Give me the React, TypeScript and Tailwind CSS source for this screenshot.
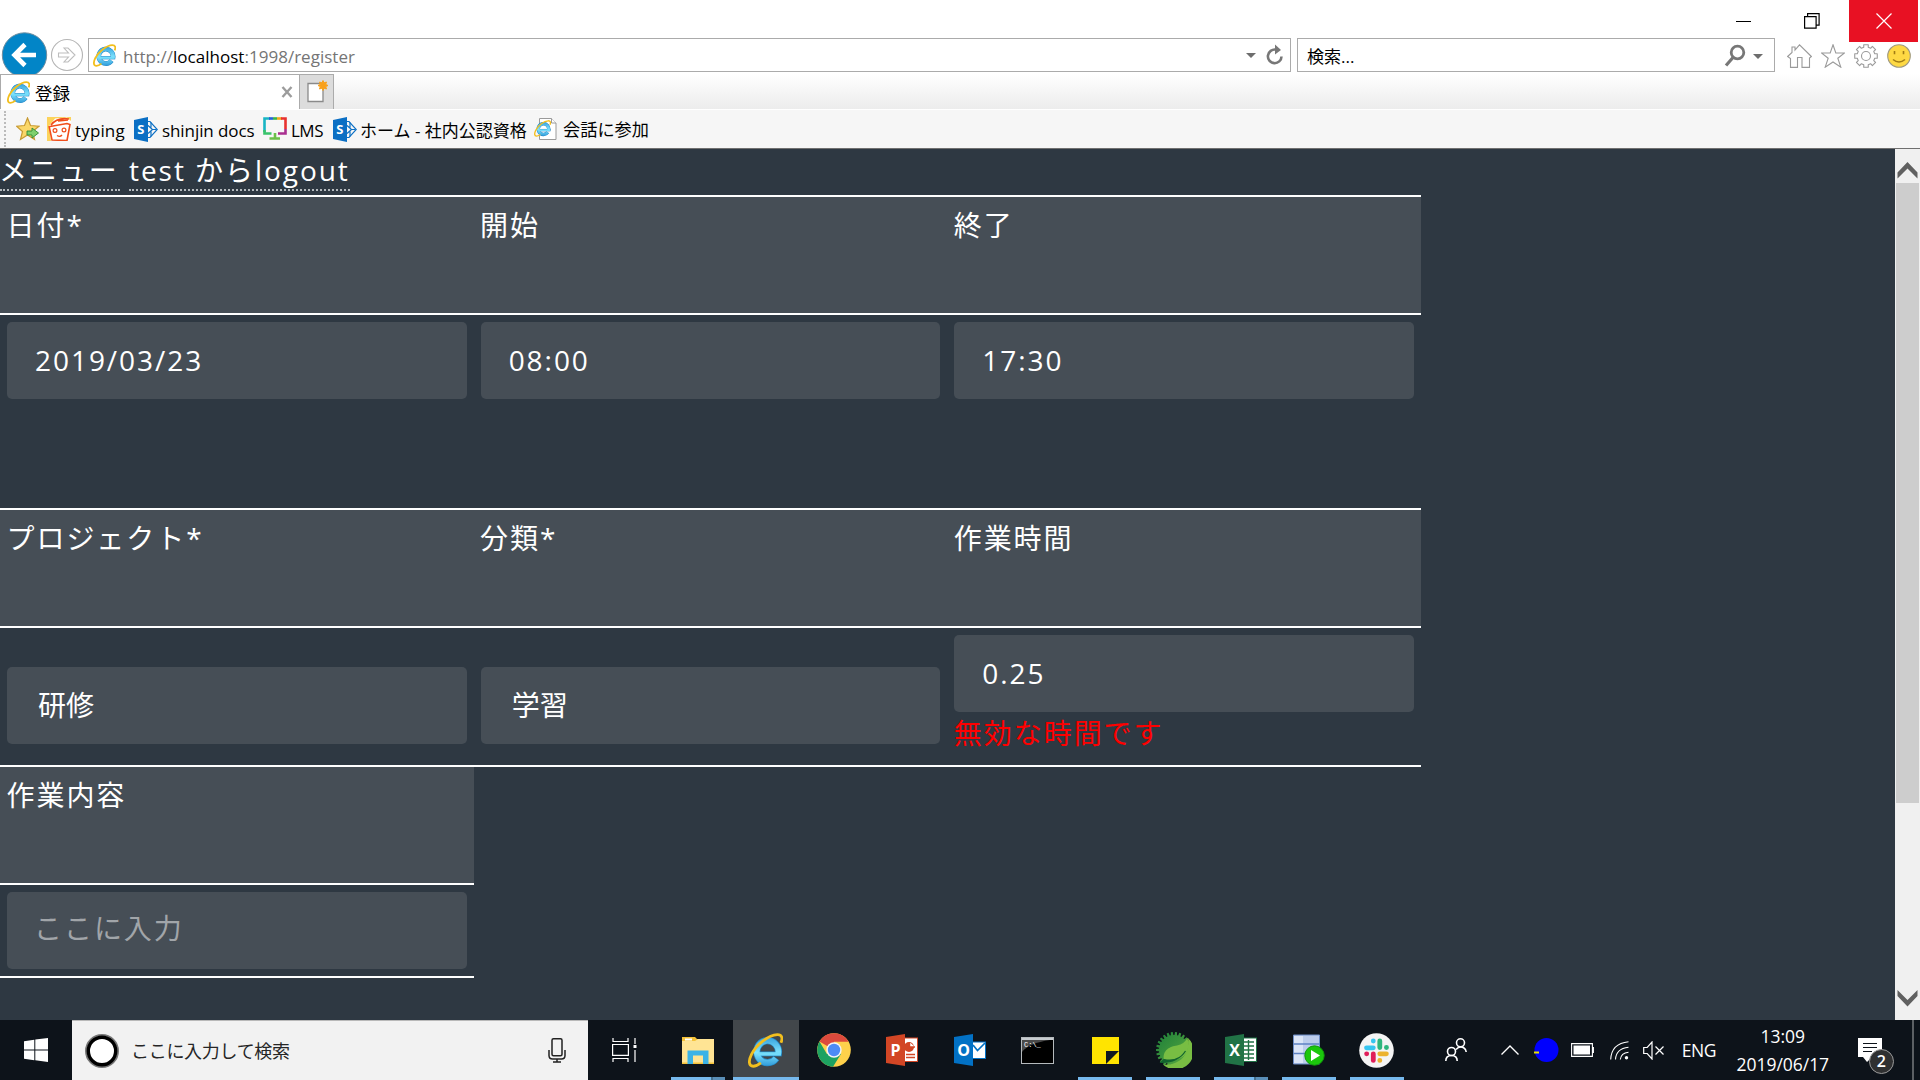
import React from "react";

const JP = "font-['Open_Sans','Noto_Sans_CJK_JP',sans-serif]";

function IeIcon({ size }: { size: number }) {
  return (
    <svg width={size} height={size} viewBox="0 0 34 34" fill="none" className="shrink-0">
      <defs>
        <linearGradient id="ieBlue" gradientUnits="userSpaceOnUse" x1="0" y1="5" x2="0" y2="33">
          <stop offset="0" stopColor="#3aa5df" />
          <stop offset="0.5" stopColor="#7fe3fd" />
          <stop offset="1" stopColor="#2a97d8" />
        </linearGradient>
      </defs>
      <path d="M27.500 24.500A10.500 10.700 0 1 1 29.300 20.500" stroke="#2387c4" strokeWidth="7" />
      <path d="M10 20.300H32.800" stroke="#2387c4" strokeWidth="4.800" />
      <path d="M27.300 24.800A10.500 10.700 0 1 1 29.300 20.500" stroke="url(#ieBlue)" strokeWidth="5.600" />
      <path d="M10 20.300H32" stroke="#74dcfa" strokeWidth="3.400" />
      <path
        d="M32 9.500C34 5 33 1.500 28.500 1.600C20 2 8.500 11 3.500 20.500C.3 27 .5 32.300 5 32.300C7.500 32.300 10 31 12.500 29"
        stroke="#f2bf1e"
        strokeWidth="2.700"
      />
    </svg>
  );
}

function SharePointIcon() {
  return (
    <svg width="24" height="25" viewBox="0 0 24 25" className="shrink-0">
      <path d="M13 4.500h3l7.300 8-7.300 8h-3" fill="none" stroke="#0b6fc4" strokeWidth="1.200" />
      <path d="M14 8.500l4.500 4-4.500 4M17 5.500v5M17 14.500v5M18.500 12.500h4" fill="none" stroke="#0b6fc4" strokeWidth="1.200" />
      <path d="M0 3L14 0V25L0 22Z" fill="#0b6fc4" />
      <text x="3.200" y="17.300" fontSize="13" fontWeight="700" fill="#fff" fontFamily="Open Sans">S</text>
    </svg>
  );
}

function Gear() {
  const pts: string[] = [];
  for (let i = 0; i < 8; i++) {
    const a = (i * Math.PI) / 4 - Math.PI / 2;
    for (const [d, r] of [[-0.25, 9], [-0.2, 11.5], [0.2, 11.5], [0.25, 9]]) {
      pts.push(`${(12 + r * Math.cos(a + d)).toFixed(2)},${(12 + r * Math.sin(a + d)).toFixed(2)}`);
    }
  }
  return (
    <svg width="24" height="24" viewBox="0 0 24 24" fill="none" stroke="#9a9a9a" strokeWidth="1.100">
      <polygon points={pts.join(" ")} strokeLinejoin="round" />
      <circle cx="12" cy="12" r="4.500" />
    </svg>
  );
}

function TitleBar() {
  return (
    <div className="h-[38px] flex justify-end items-start">
      <div className="w-[69px] h-[42px] flex items-center justify-center pr-1">
        <div className="w-[15px] h-px bg-black" />
      </div>
      <div className="w-[69px] h-[42px] flex items-center justify-center pr-[5px]">
        <svg width="16" height="16" viewBox="0 0 16 16" fill="none" stroke="#000" strokeWidth="1.200">
          <path d="M.6 3.600h11.500v11.500H.6zM3.600 3.600V.6h11.500v11.500h-3" />
        </svg>
      </div>
      <div className="relative z-10 w-[69px] h-[42px] mr-[2px] bg-[#e81123] flex items-center justify-center">
        <svg width="16" height="16" viewBox="0 0 16 16" stroke="#fff" strokeWidth="1.200">
          <path d="M.5 .5l15 15M15.500 .5l-15 15" />
        </svg>
      </div>
    </div>
  );
}

function AddressRow() {
  return (
    <div className="h-9 flex items-start">
      <div className="w-[88px] h-9 flex">
        <svg width="88" height="42" viewBox="0 0 88 42" fill="none" className="-mt-[6px] shrink-0">
          <circle cx="24.500" cy="23" r="22.200" fill="#0285c7" stroke="#6f8ea0" strokeWidth="1" />
          <path d="M36 23H15M25 12.500L14.500 23L25 33.500" stroke="#fff" strokeWidth="4.600" />
          <circle cx="67" cy="23" r="15.500" stroke="#b5b5b5" strokeWidth="1.100" />
          <path d="M58.500 21h10l-4.500-5h4l7 7-7 7h-4l4.500-5h-10z" stroke="#bdbdbd" strokeWidth="1.100" />
        </svg>
      </div>
      <div className="w-[1203px] h-[34px] border border-[#ababab] bg-white flex items-center pl-1">
        <IeIcon size={23} />
        <span className="ml-[7px] mt-[2px] text-[17px] leading-none text-[#757575] whitespace-nowrap tracking-[0.02px]">
          http://<span className="text-black">localhost</span>:1998/register
        </span>
        <svg width="44" height="24" viewBox="0 0 44 24" className="ml-auto mr-[3px]">
          <path d="M3 10h10l-5 5z" fill="#6d6d6d" />
          <path d="M38.500 13.500A6.800 6.800 0 1 1 33 6.700" fill="none" stroke="#777" strokeWidth="2.600" />
          <path d="M32 1.500l6 5.500-6 4.500z" fill="#777" />
        </svg>
      </div>
      <div className="ml-[6px] w-[478px] h-[34px] border border-[#ababab] bg-white flex items-center pl-[9px]">
        <span className="mt-[2px] text-[17px] leading-none text-black whitespace-nowrap">検索...</span>
        <svg width="44" height="24" viewBox="0 0 44 24" className="ml-auto mr-[9px] mt-[2px]">
          <circle cx="16.500" cy="8.500" r="6.300" fill="none" stroke="#777" strokeWidth="2.800" />
          <path d="M12 13.500L5 21.500" stroke="#777" strokeWidth="3.200" />
          <path d="M32 10h10l-5 5z" fill="#6d6d6d" />
        </svg>
      </div>
      <div className="ml-[12px] pt-[6px] flex gap-[9px]">
        <svg width="25" height="24" viewBox="0 0 25 24" fill="none" stroke="#9a9a9a" strokeWidth="1.100">
          <path d="M.6 12.500L5 8.500V3h3v3L12.500 .8L24.400 12.500L22.500 14V23.400H15V13.500H10.500V23.400H3.500V14.500z" />
        </svg>
        <svg width="24" height="24" viewBox="0 0 24 24" fill="none" stroke="#9a9a9a" strokeWidth="1.100">
          <path d="M12 .8L14.800 9H23.500L16.800 14.200L19.800 23.200L12 18L4.200 23.200L7.200 14.200L.5 9H9.200z" />
        </svg>
        <Gear />
        <svg width="24" height="24" viewBox="0 0 24 24" fill="none">
          <circle cx="12" cy="12" r="11.300" fill="#fed943" stroke="#a09a80" strokeWidth="1.100" />
          <path d="M7.500 7v3.200M16.500 7v3.200M6 15.500q6 5 12 0" stroke="#a17d16" strokeWidth="1.600" />
        </svg>
      </div>
    </div>
  );
}

function TabRow() {
  return (
    <div className="relative z-10 h-[35px] flex bg-gradient-to-b from-white to-[#ececec]">
      <div className="w-[299px] h-[35px] border-t border-l border-[#ababab] bg-white flex items-center pl-[6px] pr-[6px]">
        <IeIcon size={23} />
        <span className="ml-[5px] mt-[3px] text-[17.500px] leading-none text-black">登録</span>
        <svg width="12" height="12" viewBox="0 0 12 12" className="ml-auto" stroke="#9c9c9c" strokeWidth="2.400">
          <path d="M1.500 1l9 10M10.500 1l-9 10" />
        </svg>
      </div>
      <div className="w-[35px] border border-b-0 border-[#ababab] bg-[#dcdcdc] flex items-center justify-center pl-[3px]">
        <svg width="22" height="24" viewBox="0 0 22 24">
          <path d="M1 3.500h15v18H1z" fill="#fff" stroke="#8a8a8a" strokeWidth="1.300" />
          <path d="M16 .5l1.100 2.300 2.400-.8-.8 2.400 2.300 1.100-2.300 1.100.8 2.400-2.400-.8L16 10.500l-1.100-2.300-2.400.8.8-2.400L11 5.500l2.300-1.100-.8-2.400 2.400.8z" fill="#f9a11b" stroke="#f9a11b" />
        </svg>
      </div>
    </div>
  );
}

function Bookmark({ icon, label, width, gap }: { icon: React.ReactNode; label: string; width: number; gap: string }) {
  return (
    <div className="flex items-center shrink-0" style={{ width }}>
      {icon}
      <span className={`${gap} mt-[2px] leading-none text-black whitespace-nowrap`}>{label}</span>
    </div>
  );
}

function BookmarksBar() {
  return (
    <div className="h-[40px] border-t border-t-white border-b border-b-[#707070] bg-[#f6f6f6] flex items-center">
      <div className="ml-1 w-0 h-[36px] border-l-2 border-dotted border-[#bbb]" />
      <svg width="24" height="24" viewBox="0 0 24 24" className="ml-[10px] mr-[7px]">
        <path d="M11.500 1L14.500 8.500L23 9.200L16.500 14.500L18.500 22.500L11.500 18L4.500 22.500L6.500 14.500L.5 9.200L8.500 8.500z" fill="#fbd768" stroke="#c79a33" strokeWidth="1.200" />
        <path d="M11 14h5v-3l6.500 5-6.500 5V18h-5z" fill="#7fd06e" stroke="#2d8b36" strokeWidth=".9" />
      </svg>
      <Bookmark
        width={87}
        gap="ml-1 text-[17px] tracking-[0.150px]"
        label="typing"
        icon={
          <svg width="24" height="24" viewBox="0 0 24 24" className="shrink-0">
            <rect width="24" height="24" fill="#fcd35b" />
            <path d="M2 9L8 1.500 20 .5 24 4v20H4z" fill="#fff" />
            <path d="M4 8Q10 0 22 2M2 9l3 14 15 .5 3-16-3-1L3 9.500M11 4l10-1" fill="none" stroke="#f04e1b" strokeWidth="1.600" />
            <circle cx="8" cy="13.500" r="1.900" fill="none" stroke="#f04e1b" strokeWidth="1.200" />
            <circle cx="17" cy="13" r="1.900" fill="none" stroke="#f04e1b" strokeWidth="1.200" />
            <path d="M10 18.500q3 2 5-.5" fill="none" stroke="#f04e1b" strokeWidth="1.300" />
          </svg>
        }
      />
      <Bookmark width={129} gap="ml-[4px] text-[17px] tracking-[-0.080px]" label="shinjin docs" icon={<SharePointIcon />} />
      <Bookmark
        width={70}
        gap="ml-[4px] text-[17px] tracking-[-0.5px]"
        label="LMS"
        icon={
          <svg width="24" height="24" viewBox="0 0 24 24" fill="none" strokeWidth="2.600" className="shrink-0">
            <path d="M1.500 15V1.500H7" stroke="#18b5c4" />
            <path d="M6 1.500h4" stroke="#2360d8" />
            <path d="M10 1.500h4" stroke="#39b54a" />
            <path d="M14 1.500h5" stroke="#f3a51c" />
            <path d="M18 1.500h4.500V12" stroke="#e8312f" />
            <path d="M22.500 12v4.500H15" stroke="#a92f90" />
            <path d="M1.500 13v3.500h7" stroke="#39c36a" />
            <path d="M12 16v5M6.500 21.500H17" stroke="#6cc04a" />
          </svg>
        }
      />
      <Bookmark width={202} gap="ml-[3px] text-[17px]" label="ホーム - 社内公認資格" icon={<SharePointIcon />} />
      <Bookmark
        width={140}
        gap="ml-[6px] text-[17.200px]"
        label="会話に参加"
        icon={
          <span className="relative w-[22px] h-6 shrink-0 flex items-center">
            <svg width="22" height="24" viewBox="0 0 22 24" fill="#fff" stroke="#9a9a9a">
              <path d="M4.500 1.500h12l4.500 4.500v16.500H4.500z" />
              <path d="M16.500 1.500V6H21" />
            </svg>
            <span className="absolute -left-px top-[3px]">
              <IeIcon size={17} />
            </span>
          </span>
        }
      />
    </div>
  );
}

function HeadCell({ children }: { children: React.ReactNode }) {
  return <div className="w-[473.600px] pl-[6.500px] pt-[7px] leading-[42px]">{children}</div>;
}

function Input({ children, className = "pl-[28px]" }: { children: React.ReactNode; className?: string }) {
  return (
    <div className={`mx-[7px] h-[77px] pb-[2px] rounded-[5px] bg-[#464e56] flex items-center ${className}`}>{children}</div>
  );
}

function RegisterPage() {
  return (
    <div className="flex-1 bg-[#2e3842] text-white text-[28px] tracking-[1.950px] overflow-hidden">
      <div className="h-[46px] flex items-start leading-[42px] whitespace-nowrap">
        <span className="w-[120px] h-[42px] -indent-px border-b-2 border-dotted border-[#b4b9bd]">メニュー</span>
        <span className="ml-[9px] w-[221px] h-[42px] border-b-2 border-dotted border-[#b4b9bd]">test からlogout</span>
      </div>
      <div className="w-[1421px]">
        <div className="h-[120px] border-y-2 border-white bg-[#464e56] flex">
          <HeadCell>日付*</HeadCell>
          <HeadCell>開始</HeadCell>
          <HeadCell>終了</HeadCell>
        </div>
        <div className="h-[193px] pt-[7px] grid grid-cols-3">
          <Input>2019/03/23</Input>
          <Input>08:00</Input>
          <Input>17:30</Input>
        </div>
        <div className="h-[120px] border-y-2 border-white bg-[#464e56] flex">
          <HeadCell>プロジェクト*</HeadCell>
          <HeadCell>分類*</HeadCell>
          <HeadCell>作業時間</HeadCell>
        </div>
        <div className="h-[137px] pt-[7px] grid grid-cols-3">
          <Input className="mt-8 pl-[31px] tracking-normal">研修</Input>
          <Input className="mt-8 pl-[31px] tracking-normal">学習</Input>
          <div>
            <Input>0.25</Input>
            <div className="pl-[6.500px] leading-[43px] text-[#f00]">無効な時間です</div>
          </div>
        </div>
        <div className="border-t-2 border-white">
          <div className="w-[474px]">
            <div className="h-[118px] border-b-2 border-white bg-[#464e56]">
              <HeadCell>作業内容</HeadCell>
            </div>
            <div className="h-[93px] pt-[7px] border-b-2 border-white">
              <div className="mx-[7px] h-[77px] pl-[27px] pb-[6px] rounded-[5px] bg-[#464e56] text-[#a1a5a9] flex items-center">
                ここに入力
              </div>
            </div>
          </div>
        </div>
      </div>
    </div>
  );
}

function ScrollBar() {
  return (
    <div className="w-[25px] bg-[#f0f0f0] flex flex-col items-center">
      <div className="h-[34px] pt-[13px]">
        <svg width="21" height="17" viewBox="0 0 21 17" fill="#606060">
          <path d="M10.500 0L20.500 10.500V16.500L10.500 6.500L.5 16.500V10.500z" />
        </svg>
      </div>
      <div className="w-[23px] h-[620px] bg-[#cdcdcd]" />
      <svg width="21" height="17" viewBox="0 0 21 17" fill="#606060" className="mt-auto mb-[13px]">
        <path d="M10.500 16.500L20.500 6V0L10.500 10L.5 0V6z" />
      </svg>
    </div>
  );
}

function OfficeIcon({ color, letter, children }: { color: string; letter: string; children: React.ReactNode }) {
  return (
    <svg width="32" height="32" viewBox="0 0 32 32">
      {children}
      <path d="M0 3L19 0V32L0 29Z" fill={color} />
      <text x="9.500" y="21.500" textAnchor="middle" fontSize="16" fontWeight="700" fill="#fff" fontFamily="Open Sans">
        {letter}
      </text>
    </svg>
  );
}

function TaskItem({ children, run, split, active }: { children: React.ReactNode; run?: boolean; split?: boolean; active?: boolean }) {
  return (
    <div className="w-[67.900px] h-[60px] flex justify-center">
      <div className={active ? "w-[66px] flex flex-col items-center bg-[#42474b]" : "w-[54px] flex flex-col items-center"}>
        <div className="h-[57px] pt-[3px] flex items-center justify-center">{children}</div>
        {run && (
          <div className="w-full h-[3px] flex">
            <div className="flex-1 bg-[#76b9ed]" />
            {split && <div className="w-[14px] bg-[#5a8fb8] border-l-2 border-[#44708f]" />}
          </div>
        )}
      </div>
    </div>
  );
}

function SpringIcon() {
  const teeth: string[] = [];
  for (let i = 0; i < 26; i++) {
    const a = (i * Math.PI * 2) / 26;
    for (const [d, r] of [[-0.09, 15], [-0.06, 18], [0.05, 18], [0.08, 15]]) {
      teeth.push(`${(18 + r * Math.cos(a + d)).toFixed(2)},${(18 + r * Math.sin(a + d)).toFixed(2)}`);
    }
  }
  return (
    <svg width="36" height="36" viewBox="0 0 36 36" className="ml-[2px]">
      <defs>
        <linearGradient id="spring" x1="0" y1="0" x2="1" y2="1">
          <stop offset="0" stopColor="#1c7d39" />
          <stop offset="1" stopColor="#5fae40" />
        </linearGradient>
      </defs>
      <polygon points={teeth.join(" ")} fill="url(#spring)" />
      <path d="M32 6A17.800 17.800 0 0 1 7 32.500C20 34 34 26 32 6z" fill="#78bd43" />
      <path d="M31.500 6C35 20 28 30 8 28.500C6 18 14 14.500 21 13.500C26 12.500 29 10 31.500 6z" fill="#78bd43" />
      <path d="M5 30.500C14 30.500 24 28 29.500 19C24 28 15 29 8 27.500z" fill="#12652f" stroke="#12652f" strokeWidth="1.200" />
    </svg>
  );
}

function SlackIcon() {
  return (
    <svg width="35" height="35" viewBox="0 0 35 35">
      <circle cx="17.500" cy="17.500" r="17.300" fill="#f4f4f4" />
      <g strokeWidth="4.800" strokeLinecap="round">
        <path d="M14.300 8v.1M7.500 14.800h6.800" stroke="#36c5f0" />
        <path d="M20.800 8v6.500M27.400 14.500h.1" stroke="#2eb67d" />
        <path d="M20.800 27.300v.1M20.800 20.800h6.600" stroke="#ecb22e" />
        <path d="M14.300 20.800v6.600M7.600 20.800h.1" stroke="#e01e5a" />
      </g>
    </svg>
  );
}

function Taskbar() {
  return (
    <div className="h-[60px] bg-[#0d131a] flex">
      <div className="w-[72px] flex items-center justify-center">
        <svg width="24" height="24" viewBox="0 0 24 24" fill="#fff">
          <path d="M0 3.300L10.300 1.800V11.400H0zM11.300 1.600L24 0V11.400H11.300zM0 12.400H10.300V22.200L0 20.700zM11.300 12.400H24V24L11.300 22.300z" />
        </svg>
      </div>
      <div className="w-[516px] border-t border-[#b9b9b9] bg-[#f2f2f2] flex items-center pl-[13px] pr-[22px]">
        <svg width="34" height="34" viewBox="0 0 34 34" fill="none">
          <circle cx="17" cy="17" r="16" stroke="#777" strokeWidth="2" />
          <circle cx="17" cy="17" r="13.700" stroke="#000" strokeWidth="3.400" fill="#fff" />
        </svg>
        <span className="ml-[12px] text-[18px] leading-none tracking-[-0.300px] text-[#262626] whitespace-nowrap">ここに入力して検索</span>
        <svg width="18" height="25" viewBox="0 0 18 25" fill="none" stroke="#222" strokeWidth="1.500" className="ml-auto">
          <rect x="4" y=".8" width="10" height="17" rx="1.500" />
          <path d="M1 12v5.500q0 3.500 3.500 3.500h9q3.500 0 3.500-3.500V12M9 21v3M5 24h8" />
        </svg>
      </div>
      <div className="w-[76px] flex items-center justify-center pr-1">
        <svg width="25" height="24" viewBox="0 0 25 24" fill="none" stroke="#fff" strokeWidth="1.200">
          <path d="M1 0v3.500h15V0M1 24v-3.500h15V24M.6 6.500h15.800v10.800H.6zM23 0v6M23 12v12" />
          <path d="M21.500 7h3v3h-3z" fill="#fff" stroke="none" />
        </svg>
      </div>
      <TaskItem run split>
        <svg width="32" height="27" viewBox="0 0 32 27">
          <path d="M0 0h13l2 2h17v25H0z" fill="#f5c33a" />
          <path d="M0 4h13l3-2h16v23.500H0z" fill="#ffe494" />
          <path d="M3 1.500h7v2H3z" fill="#fff" />
          <path d="M5.500 27V13.500h21V27h-5.500v-8.500H11V27z" fill="#3cb3e6" />
        </svg>
      </TaskItem>
      <TaskItem run active>
        <IeIcon size={35} />
      </TaskItem>
      <TaskItem>
        <svg width="34" height="34" viewBox="0 0 34 34">
          <circle cx="17" cy="17" r="16.800" fill="#fed14b" />
          <path d="M17 17L2.500 8.500A16.800 16.800 0 0 1 31.600 8.800H17z" fill="#dc4a3d" />
          <path d="M2.500 8.500A16.800 16.800 0 0 0 16 33.800L24 21 17 17 9.900 21z" fill="#1da261" />
          <circle cx="17" cy="17" r="7.700" fill="#f4f4f4" />
          <circle cx="17" cy="17" r="6.200" fill="#4c8bf5" />
        </svg>
      </TaskItem>
      <TaskItem>
        <OfficeIcon color="#d24625" letter="P">
          <rect x="14" y="4" width="17.500" height="23.500" fill="#fff" stroke="#d24625" />
          <circle cx="23" cy="13" r="5" fill="#d24625" />
          <path d="M23.500 8v5H29M20 20.500h9M20 23.500h9" stroke="#d24625" strokeWidth="1.500" fill="#fff" />
        </OfficeIcon>
      </TaskItem>
      <TaskItem>
        <OfficeIcon color="#0271c5" letter="O">
          <rect x="14" y="8" width="17.500" height="16.500" fill="#fff" stroke="#0271c5" />
          <path d="M19 11l4.500 5.500L31 9" fill="none" stroke="#0271c5" strokeWidth="1.700" />
        </OfficeIcon>
      </TaskItem>
      <TaskItem>
        <svg width="33" height="27" viewBox="0 0 33 27">
          <rect x=".5" y=".5" width="32" height="26" fill="#000" stroke="#b5babd" />
          <path d="M1 1h31v2H1z" fill="#c6ccd0" />
          <path d="M1 3h28Q8 6 1 15z" fill="#4a4a4a" />
          <text x="3" y="10" fontSize="7" fill="#fff" fontFamily="Liberation Mono">C:\_</text>
        </svg>
      </TaskItem>
      <TaskItem run>
        <svg width="27" height="27" viewBox="0 0 27 27">
          <path d="M0 0h27v27H0z" fill="#ffe400" />
          <path d="M14 27V14h13z" fill="#101820" />
        </svg>
      </TaskItem>
      <TaskItem run>
        <SpringIcon />
      </TaskItem>
      <TaskItem run split>
        <OfficeIcon color="#217346" letter="X">
          <rect x="14" y="4" width="17.500" height="23.500" fill="#fff" stroke="#217346" />
          <path d="M19 8h10M19 12h10M19 16h10M19 20h10M19 24h10M23.500 6v20" stroke="#217346" strokeWidth="1.400" />
        </OfficeIcon>
      </TaskItem>
      <TaskItem run>
        <svg width="32" height="32" viewBox="0 0 32 32">
          <path d="M.5 1h26v29H.5z" fill="#bccdec" stroke="#6d8dc6" />
          <path d="M1 2h9v27H1z" fill="#dbe5f7" />
          <path d="M.5 10h26M.5 19.500h26" stroke="#5f83c3" strokeWidth="1.300" />
          <circle cx="21.500" cy="21.500" r="9.700" fill="#1bc70c" stroke="#0f9a08" />
          <path d="M18 16v11l9-5.500z" fill="#fff" />
        </svg>
      </TaskItem>
      <TaskItem run>
        <SlackIcon />
      </TaskItem>
      <div className="flex-1 flex items-center text-white">
        <svg width="22" height="24" viewBox="0 0 22 24" fill="none" stroke="#fff" strokeWidth="1.600" className="ml-[34px]">
          <circle cx="15.500" cy="4.800" r="4" />
          <circle cx="6.500" cy="13.500" r="4" />
          <path d="M11 11.500q4-4.500 8-1.500 2.200 1.500 2.200 4M.8 23q0-5.500 5.700-5.500T12.200 23" />
        </svg>
        <svg width="18" height="10" viewBox="0 0 18 10" fill="none" stroke="#fff" strokeWidth="1.400" className="ml-[34px]">
          <path d="M.5 9.500L9 1l8.500 8.500" />
        </svg>
        <svg width="25" height="24" viewBox="0 0 25 24" className="ml-[15px]">
          <circle cx="12.500" cy="12" r="12" fill="#0000fe" />
          <path d="M0 13.500h5v2H0z" fill="#e6df00" />
        </svg>
        <svg width="23" height="14" viewBox="0 0 23 14" fill="none" stroke="#fff" strokeWidth="1.100" className="ml-[12px]">
          <path d="M.6 .6h20.800v12.800H.6zM22.400 4v6" />
          <path d="M2.500 2.500h16.500v9H2.500z" fill="#fff" stroke="none" />
        </svg>
        <svg width="19" height="19" viewBox="0 0 19 19" fill="none" stroke="#fff" strokeWidth="1.100" className="ml-[16px] mt-px">
          <path d="M.7 18.500Q1.500 2.500 18.500 .8M5.500 18.500Q6 7.500 18.500 6.200M10.300 18.500Q11 12 18.500 11.200" />
          <circle cx="16.500" cy="16.800" r="1.700" fill="#fff" stroke="none" />
        </svg>
        <svg width="21" height="19" viewBox="0 0 21 19" fill="none" stroke="#fff" strokeWidth="1.200" className="ml-[14px]">
          <path d="M.7 6.500h3.500L9 1v17l-4.800-5.500H.7zM12.500 5.500l8 8M20.500 5.500l-8 8" />
        </svg>
        <span className="ml-[18px] mt-px w-[35px] text-[17.500px] leading-none tracking-[-0.500px]">ENG</span>
        <div className="ml-[17px] -mt-px w-[98px] text-center text-[17.500px] leading-[28px] tracking-[-0.030px] whitespace-nowrap">
          <div>13:09</div>
          <div>2019/06/17</div>
        </div>
        <div className="relative ml-[26px] w-[37px] h-[37px] mt-[13px]">
          <svg width="24" height="25" viewBox="0 0 24 25">
            <path d="M0 0h24v19H14l-5 5-4-5H0z" fill="#fff" />
            <path d="M5 5.500h14M5 9.500h14M5 13.500h9" stroke="#0d131a" strokeWidth="1.200" />
          </svg>
          <div className="absolute left-[11px] top-[11px] w-[25px] h-[25px] rounded-full border border-[#9a9a9a] bg-[#2f3031] text-[16px] font-semibold leading-[23px] text-center">2</div>
        </div>
        <div className="ml-auto mr-[6px] w-[2px] h-full bg-[#5c6064]" />
      </div>
    </div>
  );
}

export default function App() {
  return (
    <div className={`w-[1920px] h-[1080px] overflow-hidden flex flex-col bg-white ${JP}`}>
      <TitleBar />
      <AddressRow />
      <TabRow />
      <BookmarksBar />
      <div className="flex-1 flex min-h-0">
        <RegisterPage />
        <ScrollBar />
      </div>
      <Taskbar />
    </div>
  );
}
